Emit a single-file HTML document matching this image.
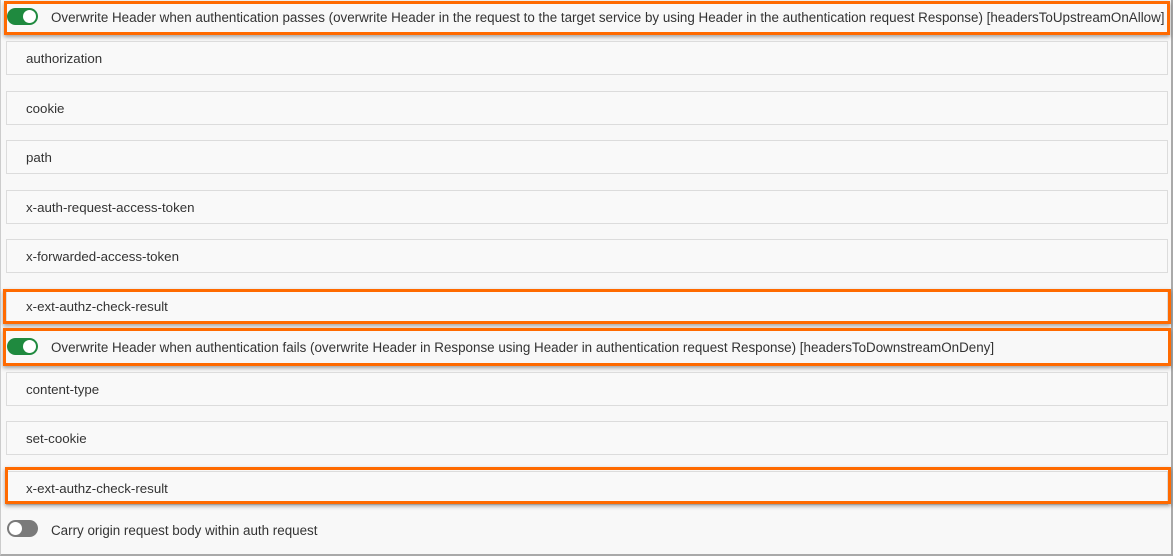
<!DOCTYPE html>
<html><head><meta charset="utf-8"><style>
*{margin:0;padding:0;box-sizing:border-box}
body{width:1173px;height:556px;background:#f8f8f8;font-family:"Liberation Sans",sans-serif;font-size:13.3px;color:#333;position:relative;overflow:hidden}
.frame{position:absolute;left:0;top:0;width:1173px;height:556px;border-right:2px solid #a9a9a9;border-bottom:2px solid #a9a9a9;border-left:1px solid #ccc}
.in{position:absolute;left:6px;width:1162px;height:34px;border:1px solid #dcdcdc;background:#f9f9f9;padding-left:19px;line-height:34px}
.or{position:absolute;border:3px solid #ff6a00;box-shadow:0 2px 4px rgba(0,0,0,.35)}
.tg{position:absolute;left:7px;width:31px;height:17px;border-radius:9px;background:#1f8a3f}
.tg::after{content:"";position:absolute;top:2px;right:2px;width:13px;height:13px;border-radius:50%;background:#fff}
.tg.off{background:#7a7a7a}
.tg.off::after{right:auto;left:2px}
.lb{position:absolute;left:51px;white-space:nowrap;font-size:13.4px}
</style></head><body>
<div class="frame"></div>
<div class="or" style="left:4px;top:1px;width:1166px;height:34px"></div>
<div class="tg" style="top:8px"></div>
<div class="lb" style="top:10px">Overwrite Header when authentication passes (overwrite Header in the request to the target service by using Header in the authentication request Response) [headersToUpstreamOnAllow]</div>
<div class="in" style="top:41px">authorization</div>
<div class="in" style="top:91px">cookie</div>
<div class="in" style="top:140px">path</div>
<div class="in" style="top:190px">x-auth-request-access-token</div>
<div class="in" style="top:239px">x-forwarded-access-token</div>
<div class="in" style="top:289px">x-ext-authz-check-result</div>
<div class="or" style="left:3px;top:289px;width:1168px;height:35px"></div>
<div class="or" style="left:3px;top:328px;width:1168px;height:38px"></div>
<div class="tg" style="top:338px"></div>
<div class="lb" style="top:340px">Overwrite Header when authentication fails (overwrite Header in Response using Header in authentication request Response) [headersToDownstreamOnDeny]</div>
<div class="in" style="top:372px">content-type</div>
<div class="in" style="top:421px">set-cookie</div>
<div class="in" style="top:471px">x-ext-authz-check-result</div>
<div class="or" style="left:5px;top:467px;width:1166px;height:37px"></div>
<div class="tg off" style="top:520px"></div>
<div class="lb" style="top:523px">Carry origin request body within auth request</div>
</body></html>
